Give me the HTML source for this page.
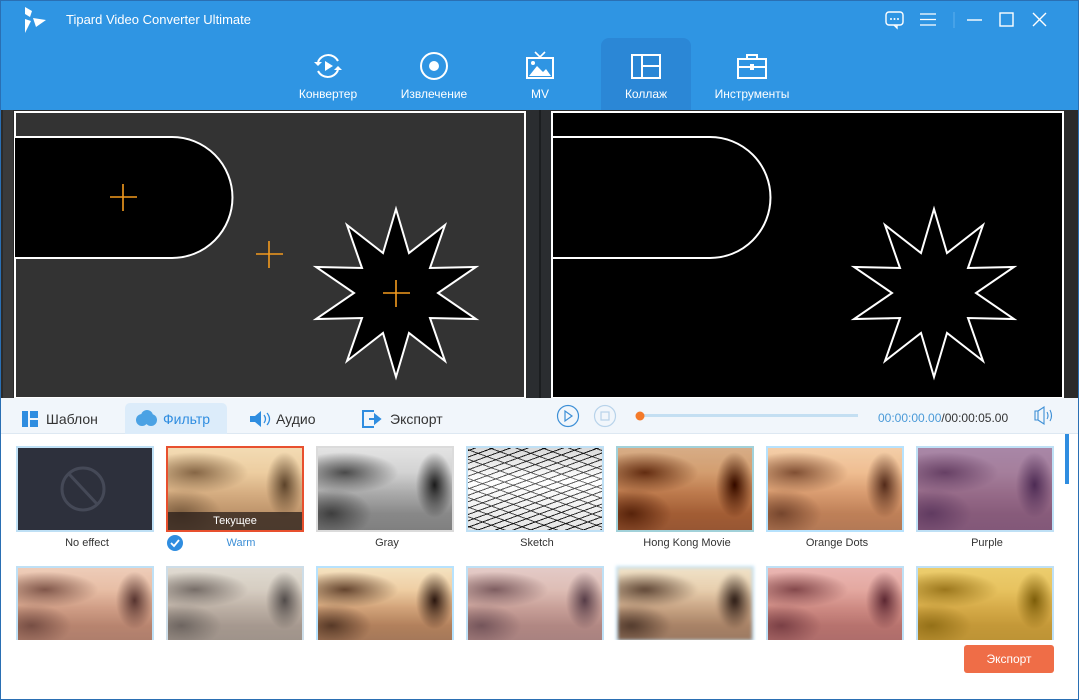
<!DOCTYPE html>
<html><head><meta charset="utf-8"><style>
*{margin:0;padding:0;box-sizing:border-box}
body{width:1079px;height:700px;overflow:hidden;font-family:"Liberation Sans",sans-serif;background:#fff;position:relative}
.abs{position:absolute}
.hdr{left:0;top:0;width:1079px;height:110px;background:#2f95e3}
.title{left:66px;top:12px;color:#fff;font-size:13px}
.nav{top:40px;height:70px;color:#fff;font-size:12px;text-align:center}
.nav span{position:absolute;left:0;right:0;top:47px}
.nav svg{position:absolute;left:50%;transform:translateX(-50%);top:10px}
.frame{left:0;top:0;width:1079px;height:700px;border:1px solid #2a6fb3;pointer-events:none}
.tb{left:0;top:398px;width:1079px;height:36px;background:#f1f6fb;border-bottom:1px solid #dde8f2}
.tab{top:405px;height:28px;font-size:14px;color:#333;line-height:28px}
.th{width:138px;height:86px;border:2px solid #bfe0f5}
.lbl{font-size:11px;color:#333;width:150px;text-align:center}
.scene{background:
 radial-gradient(ellipse 14% 40% at 87% 45%,rgba(30,15,10,.95),rgba(30,15,10,0) 100%),
 radial-gradient(ellipse 40% 25% at 20% 30%,rgba(80,55,40,.9),rgba(80,55,40,0)),
 radial-gradient(ellipse 30% 30% at 10% 80%,rgba(60,40,30,.8),rgba(60,40,30,0)),
 linear-gradient(180deg,#f0e2c8 0%,#e8cfae 30%,#c9a585 55%,#a88266 80%,#9c7a62 100%)}
.ov{position:absolute;inset:0}
</style></head><body>
<div class="abs hdr"></div>
<svg class="abs" style="left:22px;top:5px" width="28" height="30" viewBox="0 0 28 30"><path d="M3 2 L10 6 L8 12 L3 9Z M3 14 L9 16 L3 28Z M11 13 L24 15 L14 22Z" fill="#fff"/></svg>
<div class="abs title">Tipard Video Converter Ultimate</div>
<svg class="abs" style="left:884px;top:10px" width="180" height="20" viewBox="0 0 180 20">
<rect x="2" y="2" width="17" height="13" rx="3" fill="none" stroke="#fff" stroke-width="1.4"/><path d="M10 15 L13 18 L13 15" fill="none" stroke="#fff" stroke-width="1.3"/><circle cx="7" cy="9" r="1" fill="#fff"/><circle cx="10.5" cy="9" r="1" fill="#fff"/><circle cx="14" cy="9" r="1" fill="#fff"/>
<path d="M36 4h16M36 9.5h16M36 15h16" stroke="#fff" stroke-width="1.3"/>
<path d="M70 2v16" stroke="#5db0ee" stroke-width="1"/>
<path d="M83 10h15" stroke="#fff" stroke-width="1.4"/>
<rect x="116" y="3" width="13" height="13" fill="none" stroke="#fff" stroke-width="1.4"/>
<path d="M149 3l13 13M162 3l-13 13" stroke="#fff" stroke-width="1.4"/>
</svg>
<div class="abs" style="left:601px;top:38px;width:90px;height:72px;background:#2b87d6;border-radius:8px 8px 0 0"></div>
<div class="abs nav" style="left:288px;width:80px"><svg width="36" height="32" viewBox="0 0 36 32"><path d="M8 12 A11 11 0 0 1 28 11 M28 20 A11 11 0 0 1 8 21" fill="none" stroke="#fff" stroke-width="2"/><path d="M4 12h8l-4 4z M32 20h-8l4-4z" fill="#fff"/><path d="M15 11v10l8-5z" fill="#fff"/></svg><span>Конвертер</span></div>
<div class="abs nav" style="left:394px;width:80px"><svg width="32" height="32" viewBox="0 0 32 32"><circle cx="16" cy="16" r="13" fill="none" stroke="#fff" stroke-width="2"/><circle cx="16" cy="16" r="5" fill="#fff"/></svg><span>Извлечение</span></div>
<div class="abs nav" style="left:510px;width:60px"><svg width="32" height="32" viewBox="0 0 32 32"><rect x="3" y="8" width="26" height="20" fill="none" stroke="#fff" stroke-width="2"/><path d="M11 2l5 5 5-5" fill="none" stroke="#fff" stroke-width="1.6"/><path d="M5 26 L13 16 L19 22 L22 19 L27 26Z" fill="#fff"/><circle cx="9" cy="13" r="2" fill="#fff"/></svg><span>MV</span></div>
<div class="abs nav" style="left:606px;width:80px"><svg width="32" height="32" viewBox="0 0 32 32"><rect x="2" y="5" width="28" height="23" fill="none" stroke="#fff" stroke-width="2"/><path d="M12 5v23M12 16h18" stroke="#fff" stroke-width="2"/></svg><span>Коллаж</span></div>
<div class="abs nav" style="left:707px;width:90px"><svg width="32" height="32" viewBox="0 0 32 32"><rect x="2" y="9" width="28" height="19" fill="none" stroke="#fff" stroke-width="2"/><path d="M11 9V5h10v4M2 17h28" fill="none" stroke="#fff" stroke-width="2"/><rect x="14" y="14" width="4" height="6" fill="#fff"/></svg><span>Инструменты</span></div>

<svg class="abs" style="left:0;top:110px" width="1079" height="288" viewBox="0 110 1079 288">
<rect x="0" y="110" width="1079" height="288" fill="#2b2b2b"/>
<rect x="3" y="110" width="10" height="288" fill="#3a3a3a"/>
<rect x="15" y="112" width="510" height="286" fill="#333" stroke="#fff" stroke-width="2"/>
<rect x="527" y="110" width="24" height="288" fill="#2a2d30"/>
<path d="M540 110v288" stroke="#1b1e20" stroke-width="2"/>
<rect x="552" y="112" width="511" height="286" fill="#000" stroke="#fff" stroke-width="2"/>
<rect x="1065" y="110" width="14" height="288" fill="#2b2b2b"/>
<path d="M15 137H172A60.5 60.5 0 0 1 172 258H15" fill="#000" stroke="#fff" stroke-width="2"/>
<path d="M553 137H710A60.5 60.5 0 0 1 710 258H553" fill="#000" stroke="#fff" stroke-width="2"/>
<polygon transform="translate(396 293)" points="0,-84 13,-40 49,-68 34,-25 80,-26 42,0 80,26 34,25 49,68 13,40 0,84 -13,40 -49,68 -34,25 -80,26 -42,0 -80,-26 -34,-25 -49,-68 -13,-40" fill="#000" stroke="#fff" stroke-width="2"/>
<polygon transform="translate(934 293)" points="0,-84 13,-40 49,-68 34,-25 80,-26 42,0 80,26 34,25 49,68 13,40 0,84 -13,40 -49,68 -34,25 -80,26 -42,0 -80,-26 -34,-25 -49,-68 -13,-40" fill="#000" stroke="#fff" stroke-width="2"/>
<g stroke="#f39a1e" stroke-width="1.6"><path d="M110 197h27M123 184v27"/><path d="M256 254h27M269 241v27"/><path d="M383 293h27M396 280v27"/></g>
</svg>

<div class="abs tb"></div>
<div class="abs" style="left:125px;top:403px;width:102px;height:31px;background:#dcecfa;border-radius:5px 5px 0 0"></div>
<svg class="abs" style="left:22px;top:411px" width="16" height="16"><rect x="0" y="0" width="6" height="16" fill="#2f8de0"/><rect x="8" y="0" width="8" height="7" fill="#2f8de0"/><rect x="8" y="9" width="8" height="7" fill="#2f8de0"/></svg>
<div class="abs tab" style="left:46px">Шаблон</div>
<svg class="abs" style="left:135px;top:410px" width="22" height="16"><circle cx="7" cy="10" r="6" fill="#4ba2e4"/><circle cx="12" cy="6" r="6" fill="#4ba2e4"/><circle cx="16" cy="10" r="6" fill="#4ba2e4"/></svg>
<div class="abs tab" style="left:163px;color:#2f8de0">Фильтр</div>
<svg class="abs" style="left:249px;top:410px" width="22" height="18"><path d="M1 6h5l6-5v16l-6-5H1z" fill="#2f8de0"/><path d="M15 5q3 4 0 8M18 3q5 6 0 12" fill="none" stroke="#2f8de0" stroke-width="1.3"/></svg>
<div class="abs tab" style="left:276px">Аудио</div>
<svg class="abs" style="left:362px;top:410px" width="22" height="18"><path d="M12 1H1v16h11" fill="none" stroke="#2f8de0" stroke-width="2"/><path d="M7 9h9M13 5l5 4-5 4z" fill="#2f8de0" stroke="#2f8de0" stroke-width="2"/></svg>
<div class="abs tab" style="left:390px">Экспорт</div>

<svg class="abs" style="left:555px;top:404px" width="500" height="24">
<circle cx="13" cy="12" r="10.5" fill="none" stroke="#3d8fd6" stroke-width="1.2"/><path d="M10 7v10l7-5z" fill="none" stroke="#3d8fd6" stroke-width="1.2"/>
<circle cx="50" cy="12" r="10.5" fill="none" stroke="#b8d3ea" stroke-width="1.2"/><rect x="46" y="8" width="8" height="8" fill="none" stroke="#b8d3ea" stroke-width="1.2"/>
<rect x="84" y="10" width="219" height="3" fill="#c4dff2"/><circle cx="85" cy="12" r="4.5" fill="#f47a2a"/>
<path d="M480 7h3v9h-3z M483 7l6-4v17l-6-4" fill="none" stroke="#3d8fd6" stroke-width="1.1"/><path d="M492 8q2 4 0 7M495 6q3 6 0 11" fill="none" stroke="#3d8fd6" stroke-width="1.1"/>
</svg>
<div class="abs" style="left:878px;top:411px;font-size:12px;color:#333"><span style="color:#4a9ad8">00:00:00.00</span>/00:00:05.00</div>

<div class="abs" style="left:1065px;top:434px;width:4px;height:50px;background:#2f8de0"></div>

<div class="abs th" style="left:16px;top:446px;background:#2d303c"><svg style="position:absolute;left:35px;top:13px" width="60" height="56"><circle cx="30" cy="28" r="21" fill="none" stroke="#454957" stroke-width="3"/><path d="M16 13l28 30" stroke="#454957" stroke-width="3"/></svg></div>
<div class="abs th scene" style="left:166px;top:446px;border-color:#e8502e"><div class="ov" style="background:rgba(250,200,120,.25)"></div><div class="ov" style="top:64px;background:rgba(40,30,25,.75);color:#fff;font-size:11px;text-align:center;line-height:18px">Текущее</div></div>
<div class="abs th scene" style="left:316px;top:446px;filter:grayscale(1)"></div>
<div class="abs th" style="left:466px;top:446px;background:repeating-linear-gradient(160deg,#fff 0 2px,#111 2px 3px,#fff 3px 6px),repeating-linear-gradient(20deg,#fff 0 3px,#333 3px 4px,#fff 4px 9px);background-blend-mode:multiply"><div class="ov" style="background:linear-gradient(180deg,rgba(0,0,0,.15),rgba(255,255,255,.35) 40%,rgba(0,0,0,.1))"></div></div>
<div class="abs th scene" style="left:616px;top:446px;filter:saturate(1.4) contrast(1.2) brightness(.85)"><div class="ov" style="background:rgba(150,60,30,.2)"></div></div>
<div class="abs th scene" style="left:766px;top:446px;filter:saturate(1.3)"><div class="ov" style="background:rgba(220,130,90,.2)"></div></div>
<div class="abs th scene" style="left:916px;top:446px"><div class="ov" style="background:rgba(110,60,140,.55)"></div></div>
<div class="abs lbl" style="left:12px;top:537px">No effect</div>
<svg class="abs" style="left:167px;top:535px" width="16" height="16"><circle cx="8" cy="8" r="8" fill="#2f8de0"/><path d="M4 8l3 3 5-6" fill="none" stroke="#fff" stroke-width="1.8"/></svg>
<div class="abs lbl" style="left:166px;top:537px;color:#3d8fd6">Warm</div>
<div class="abs lbl" style="left:312px;top:537px">Gray</div>
<div class="abs lbl" style="left:462px;top:537px">Sketch</div>
<div class="abs lbl" style="left:612px;top:537px">Hong Kong Movie</div>
<div class="abs lbl" style="left:762px;top:537px">Orange Dots</div>
<div class="abs lbl" style="left:912px;top:537px">Purple</div>

<div class="abs th scene" style="left:16px;top:566px;height:76px"><div class="ov" style="background:rgba(230,140,140,.25)"></div></div>
<div class="abs th scene" style="left:166px;top:566px;height:76px;filter:grayscale(.5)"><div class="ov" style="background:rgba(200,200,200,.3)"></div></div>
<div class="abs th scene" style="left:316px;top:566px;height:76px;filter:saturate(1.3)"></div>
<div class="abs th scene" style="left:466px;top:566px;height:76px"><div class="ov" style="background:rgba(200,150,200,.3)"></div></div>
<div class="abs th scene" style="left:616px;top:566px;height:76px;filter:blur(1.5px)"></div>
<div class="abs th scene" style="left:766px;top:566px;height:76px"><div class="ov" style="background:rgba(220,80,130,.3)"></div></div>
<div class="abs th scene" style="left:916px;top:566px;height:76px"><div class="ov" style="background:rgba(230,180,0,.45)"></div></div>
<div class="abs" style="left:0;top:640px;width:1079px;height:60px;background:#fff"></div>
<div class="abs" style="left:964px;top:645px;width:90px;height:28px;background:#ef6d47;border-radius:3px;color:#fff;font-size:12px;text-align:center;line-height:28px">Экспорт</div>
<div class="abs frame"></div>
</body></html>
